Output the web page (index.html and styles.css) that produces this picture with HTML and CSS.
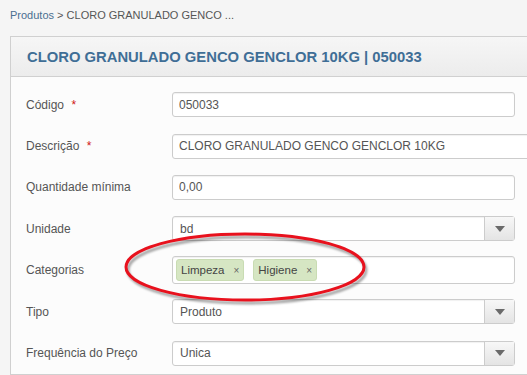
FILE: index.html
```html
<!DOCTYPE html>
<html lang="pt">
<head>
    <meta charset="UTF-8">
    <title>Produto - CLORO GRANULADO GENCO GENCLOR 10KG</title>
    <link rel="stylesheet" href="styles.css">
</head>
<body>
    <div class="breadcrumb">
        <a href="#">Produtos</a> &gt; CLORO GRANULADO GENCO ...
    </div>

    <div class="card">
        <div class="card-header">
            <h2>CLORO GRANULADO GENCO GENCLOR 10KG | 050033</h2>
        </div>
        <form class="card-body">
            <div class="row">
                <label>Código <span class="req">*</span></label>
                <div class="field"><input type="text" value="050033"></div>
            </div>
            <div class="row">
                <label>Descrição <span class="req">*</span></label>
                <div class="field wide"><input type="text" value="CLORO GRANULADO GENCO GENCLOR 10KG"></div>
            </div>
            <div class="row">
                <label>Quantidade mínima</label>
                <div class="field"><input type="text" value="0,00"></div>
            </div>
            <div class="row">
                <label>Unidade</label>
                <div class="field select">
                    <span class="value">bd</span>
                    <span class="arrow"></span>
                </div>
            </div>
            <div class="row">
                <label>Categorias</label>
                <div class="field tags">
                    <span class="tag">Limpeza <b>×</b></span>
                    <span class="tag">Higiene <b>×</b></span>
                </div>
            </div>
            <div class="row">
                <label>Tipo</label>
                <div class="field select">
                    <span class="value">Produto</span>
                    <span class="arrow"></span>
                </div>
            </div>
            <div class="row">
                <label>Frequência do Preço</label>
                <div class="field select">
                    <span class="value">Unica</span>
                    <span class="arrow"></span>
                </div>
            </div>
        </form>
    </div>

    <!-- highlight drawn over the categories field -->
    <svg class="highlight" width="260" height="80" viewBox="0 0 260 80">
        <ellipse cx="130" cy="37" rx="119" ry="33" fill="none" stroke="#e8111d" stroke-width="3"/>
    </svg>
</body>
</html>
```

FILE: styles.css
```css
body {
    margin: 0;
    background-color: #f5f5f5;
    font-family: 'Liberation Sans', Arial, sans-serif;
    font-size: 12px;
    color: #555;
    overflow: hidden;
}

.breadcrumb {
    padding: 9px 10px 0;
    height: 17px;
    font-size: 11px;
    color: #555;
}

.breadcrumb a {
    color: #4a6f91;
    text-decoration: none;
}

.card {
    margin: 10px 0 0 10px;
    width: 620px;
    border: 1px solid #d0d0d0;
    background: #fff;
}

.card-header {
    height: 39px;
    display: flex;
    align-items: center;
    padding-left: 16px;
    background: linear-gradient(#f6f6f6, #ececec);
    border-bottom: 1px solid #d0d0d0;
}

.card-header h2 {
    margin: 0;
    font-size: 14.8px;
    font-weight: bold;
    color: #3f6e96;
}

.card-body {
    padding-top: 7px;
    background: #fcfcfc;
}

.row {
    display: flex;
    align-items: center;
    height: 41.4px;
}

.row label {
    width: 146px;
    padding-left: 15px;
    flex-shrink: 0;
}

.req {
    color: #d01616;
    margin-left: 4px;
}

.field {
    width: 343px;
    height: 25px;
    box-sizing: border-box;
    border: 1px solid #ccc;
    border-radius: 3px;
    background: #fff;
    box-shadow: inset 0 1px 1px rgba(0,0,0,.06);
    display: flex;
    align-items: center;
}

.field.wide {
    width: 400px;
}

.field input {
    border: none;
    outline: none;
    background: transparent;
    width: 100%;
    padding: 0 6px;
    font-family: inherit;
    font-size: 12px;
    color: #555;
}

.select .value {
    flex: 1;
    padding-left: 7px;
}

.select .arrow {
    width: 29px;
    height: 100%;
    border-left: 1px solid #ccc;
    background: linear-gradient(#f7f7f7, #e4e4e4);
    display: flex;
    align-items: center;
    justify-content: center;
}

.select .arrow::after {
    content: "";
    border-left: 5px solid transparent;
    border-right: 5px solid transparent;
    border-top: 6px solid #6a6a6a;
}

.tags {
    height: 28px;
    padding-left: 3px;
    gap: 9px;
}

.tag {
    background: #d6e6c3;
    border: 1px solid #c9dcb3;
    border-radius: 3px;
    height: 20px;
    display: flex;
    align-items: center;
    padding: 0 4px 0 4px;
    font-size: 11.5px;
    color: #444;
}

.tag b {
    font-weight: normal;
    font-size: 10px;
    color: #666;
    margin-left: 9px;
}

.highlight {
    position: absolute;
    left: 115px;
    top: 230px;
    filter: drop-shadow(2px 3px 1px rgba(0,0,0,.35));
}
```
